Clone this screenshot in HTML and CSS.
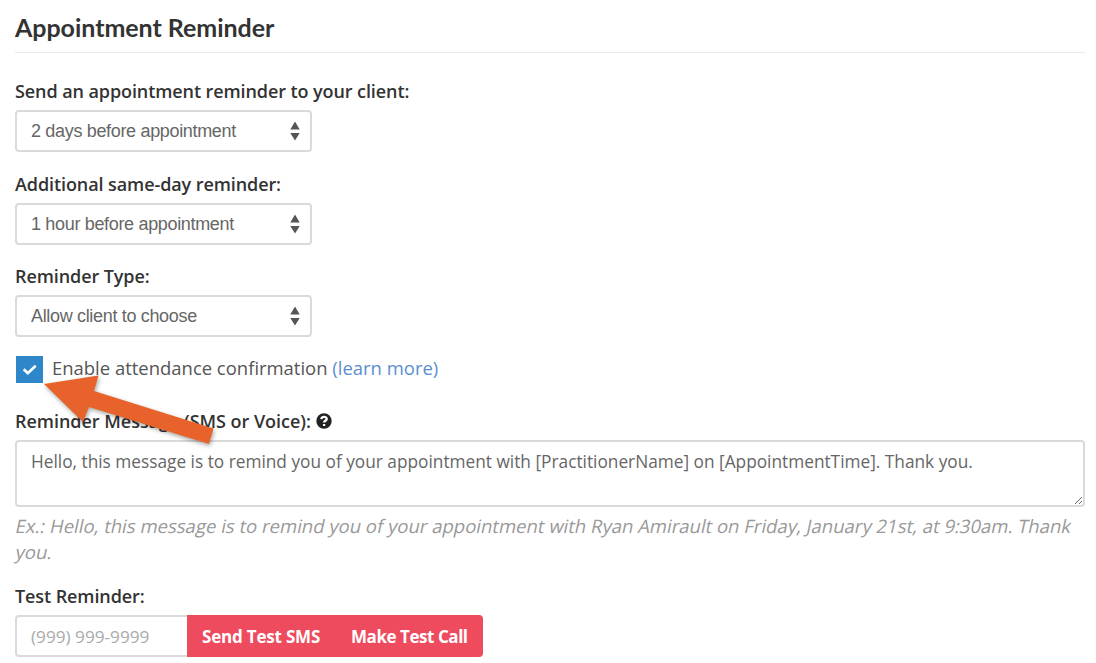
FILE: index.html
```html
<!DOCTYPE html>
<html lang="en">
<head>
  <meta charset="UTF-8">
  <meta name="viewport" content="width=device-width, initial-scale=1.0">
  <title>Appointment Reminder</title>
  <link rel="stylesheet" href="styles.css">
</head>
<body>
  <form class="reminder-form">
    <h2 class="title">Appointment Reminder</h2>

    <div class="form-group">
      <label for="reminder">Send an appointment reminder to your client:</label>
      <div class="select-wrap">
        <select id="reminder" class="form-control">
          <option>2 days before appointment</option>
        </select>
        <svg class="arrows" viewBox="0 0 10 20"><path d="M5 0.5L9.7 8.5H0.3zM0.3 12H9.7L5 19.5z"/></svg>
      </div>
    </div>

    <div class="form-group">
      <label for="same-day">Additional same-day reminder:</label>
      <div class="select-wrap">
        <select id="same-day" class="form-control">
          <option>1 hour before appointment</option>
        </select>
        <svg class="arrows" viewBox="0 0 10 20"><path d="M5 0.5L9.7 8.5H0.3zM0.3 12H9.7L5 19.5z"/></svg>
      </div>
    </div>

    <div class="form-group">
      <label for="type">Reminder Type:</label>
      <div class="select-wrap">
        <select id="type" class="form-control">
          <option>Allow client to choose</option>
        </select>
        <svg class="arrows" viewBox="0 0 10 20"><path d="M5 0.5L9.7 8.5H0.3zM0.3 12H9.7L5 19.5z"/></svg>
      </div>
    </div>

    <div class="confirm-row">
      <span class="checkbox">
        <svg viewBox="0 0 27 27"><path d="M7.7 13.2L11.8 17.2L19.7 9.8"/></svg>
      </span>
      <span class="confirm-text">Enable attendance confirmation <a href="#">(learn more)</a></span>
      <!-- Arrow pointing at the checkbox -->
      <svg class="pointer" viewBox="0 0 180 80"><path d="M4 12L58.5 3.5L54 19L173.5 56.5L169 72L49 35L43 50z"/></svg>
    </div>

    <div class="message-group">
      <div class="label-row">
        <label for="message" class="message-label">Reminder Message (SMS or Voice):</label>
        <svg class="help-icon" viewBox="0 0 16 16">
          <circle cx="8" cy="8" r="7.7"/>
          <path d="M5.3 6.2C5.5 3.2 10.7 3.1 10.7 6C10.7 7.8 8.1 7.8 8.1 9.6"/>
          <path d="M8.1 11V13"/>
        </svg>
      </div>
      <textarea id="message" class="form-control">Hello, this message is to remind you of your appointment with [PractitionerName] on [AppointmentTime]. Thank you.</textarea>
      <p class="example">
        <span>Ex.: Hello, this message is to remind you of your appointment with Ryan Amirault on Friday, January 21st, at 9:30am. Thank</span>
        <span>you.</span>
      </p>
    </div>

    <div class="test-group">
      <label for="phone">Test Reminder:</label>
      <div class="input-group">
        <input type="text" id="phone" class="form-control" placeholder="(999) 999-9999">
        <button type="button" class="btn btn-sms">Send Test SMS</button>
        <button type="button" class="btn btn-call">Make Test Call</button>
      </div>
    </div>
  </form>
</body>
</html>
```
FILE: styles.css
```css
* {
  box-sizing: border-box;
}

body {
  margin: 0;
  background: #fff;
  font-family: "Open Sans", sans-serif;
  font-size: 18px;
  color: #555;
  overflow: hidden;
}

.reminder-form {
  width: 1070px;
  margin-left: 15px;
}

/* Heading */
.title {
  height: 53px;
  margin: 0 0 25px;
  padding-top: 11px;
  border-bottom: 1px solid #eaeaea;
  font-family: Lato, sans-serif;
  font-size: 25px;
  font-weight: 700;
  line-height: 32px;
  letter-spacing: -0.04px;
  color: #333;
}

label {
  display: block;
  width: max-content;
  height: 26px;
  line-height: 26px;
  font-weight: 600;
  letter-spacing: -0.09px;
  color: #333;
}

.form-group {
  height: 92.5px;
}

/* Form controls */
.form-control {
  display: block;
  border: 2px solid #dadada;
  border-radius: 4px;
  background: #fff;
  color: #666;
  outline: none;
}

.select-wrap {
  position: relative;
  width: 297px;
  margin-top: 6px;
}

select.form-control {
  width: 100%;
  height: 42px;
  padding: 0 14px;
  appearance: none;
  font-family: "Liberation Sans", sans-serif;
  font-size: 18px;
  letter-spacing: -0.33px;
}

.arrows {
  position: absolute;
  top: 11px;
  right: 12px;
  width: 10px;
  height: 20px;
  fill: #555;
}

/* Attendance confirmation */
.confirm-row {
  position: relative;
  display: flex;
  align-items: center;
  height: 28px;
}

.checkbox {
  width: 27px;
  height: 27px;
  margin: 0 9px 0 1px;
  background: #2e87c8;
}

.checkbox svg {
  display: block;
  fill: none;
  stroke: #fff;
  stroke-width: 2.6;
}

.confirm-text {
  padding-bottom: 4px;
  font-size: 18.47px;
  line-height: 24px;
}

.confirm-text a {
  color: #5c8fcf;
  text-decoration: none;
}

.pointer {
  position: absolute;
  top: 16px;
  left: 25px;
  width: 180px;
  height: 80px;
  fill: #e8632b;
  filter: drop-shadow(1px 2px 2px rgba(0, 0, 0, 0.35));
}

/* Message */
.message-group {
  height: 173px;
  padding-top: 24px;
}

.label-row {
  display: flex;
  align-items: center;
  gap: 5px;
}

.message-label {
  letter-spacing: -0.03px;
}

.help-icon {
  width: 16px;
  height: 16px;
  fill: #222;
}

.help-icon path {
  fill: none;
  stroke: #fff;
  stroke-width: 2.3;
}

textarea.form-control {
  width: 1070px;
  height: 67px;
  margin-top: 6px;
  padding: 7px 14px 5px;
  font-family: "Open Sans", sans-serif;
  font-size: 17.27px;
  line-height: 26px;
}

.example {
  margin: 6px 0 0 1px;
  font-size: 18.53px;
  line-height: 26px;
  color: #999;
}

/* Slanted upright face, one line each */
.example span {
  display: block;
  width: max-content;
  transform: skewX(-12deg);
}

/* Test reminder */
.test-group {
  padding-top: 26px;
}

.input-group {
  display: flex;
  height: 42px;
  margin-top: 6px;
}

input.form-control {
  width: 172px;
  padding: 2px 14px 0;
  border-right: none;
  border-radius: 4px 0 0 4px;
  font-family: "Open Sans", sans-serif;
  font-size: 17.2px;
}

input::placeholder {
  color: #aaa;
}

.btn {
  padding: 2px 0 0 15px;
  border: none;
  background: #ee4b5e;
  color: #fff;
  font-family: "Open Sans", sans-serif;
  font-size: 17px;
  font-weight: 700;
  text-align: left;
  white-space: nowrap;
}

.btn-sms {
  width: 149px;
  letter-spacing: -0.2px;
}

.btn-call {
  width: 147px;
  border-radius: 0 4px 4px 0;
  letter-spacing: -0.45px;
}
```
